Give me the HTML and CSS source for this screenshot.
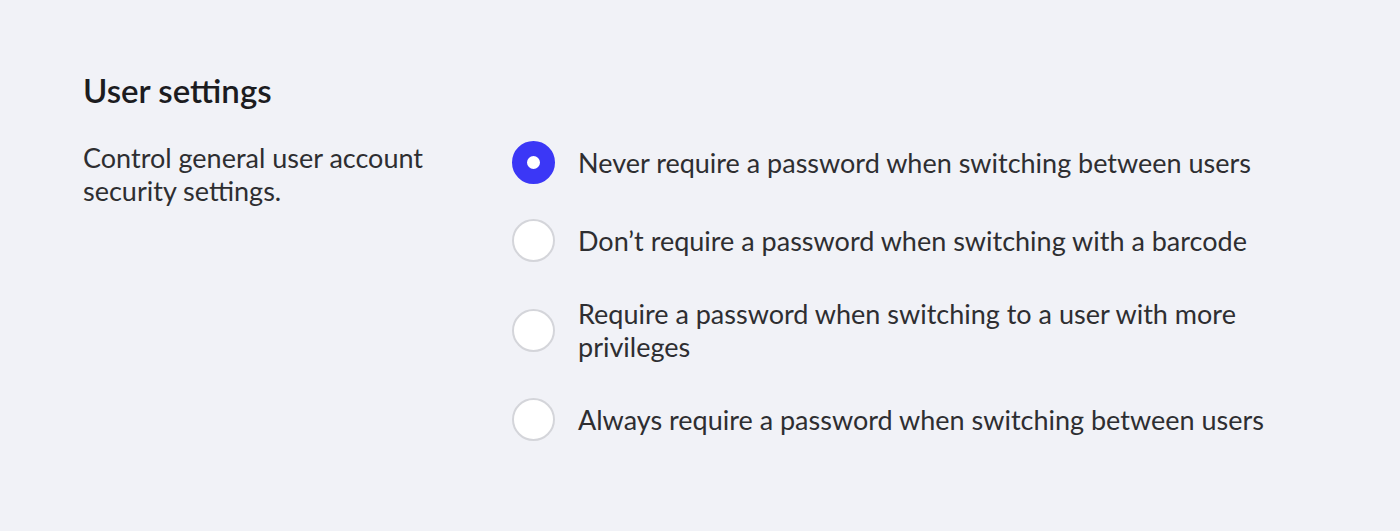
FILE: index.html
```html
<!DOCTYPE html>
<html lang="en">
<head>
    <meta charset="UTF-8">
    <meta name="viewport" content="width=device-width, initial-scale=1.0">
    <title>User settings</title>
    <link rel="stylesheet" href="styles.css">
</head>
<body>
    <section class="settings">
        <h2 class="settings-title">User settings</h2>
        <div class="settings-body">
            <p class="settings-desc">Control general user account security settings.</p>
            <div class="options">
                <label class="option">
                    <input type="radio" name="switching" checked>
                    <span class="option-text">Never require a password when switching between users</span>
                </label>
                <label class="option">
                    <input type="radio" name="switching">
                    <span class="option-text">Don’t require a password when switching with a barcode</span>
                </label>
                <label class="option">
                    <input type="radio" name="switching">
                    <span class="option-text">Require a password when switching to a user with more privileges</span>
                </label>
                <label class="option">
                    <input type="radio" name="switching">
                    <span class="option-text">Always require a password when switching between users</span>
                </label>
            </div>
        </div>
    </section>
</body>
</html>
```

FILE: styles.css
```css
/* Page */
body {
    margin: 0;
    background: #f1f2f7;
    font-family: Lato, "Open Sans", sans-serif;
    color: #2e2e31;
}

.settings {
    padding: 68px 83px 0;
}

/* Heading */
.settings-title {
    margin: 0;
    font-size: 33px;
    font-weight: 600;
    line-height: 44px;
    color: #1c1c1f;
}

.settings-body {
    display: grid;
    grid-template-columns: 429px 1fr;
    margin-top: 29px;
}

.settings-desc {
    margin: 0;
    max-width: 400px;
    font-size: 27px;
    line-height: 33px;
}

/* Radio list */
.options {
    display: flex;
    flex-direction: column;
    gap: 35px;
}

.option {
    display: flex;
    align-items: center;
    gap: 23px;
    font-size: 27px;
    line-height: 33px;
    cursor: pointer;
}

.option-text {
    max-width: 700px;
}

.option input {
    appearance: none;
    flex: none;
    width: 43px;
    height: 43px;
    margin: 0;
    border: 2px solid #d4d5da;
    border-radius: 50%;
    background: #fff;
    box-sizing: border-box;
}

.option input:checked {
    border: 15px solid #3b37f6;
}
```
